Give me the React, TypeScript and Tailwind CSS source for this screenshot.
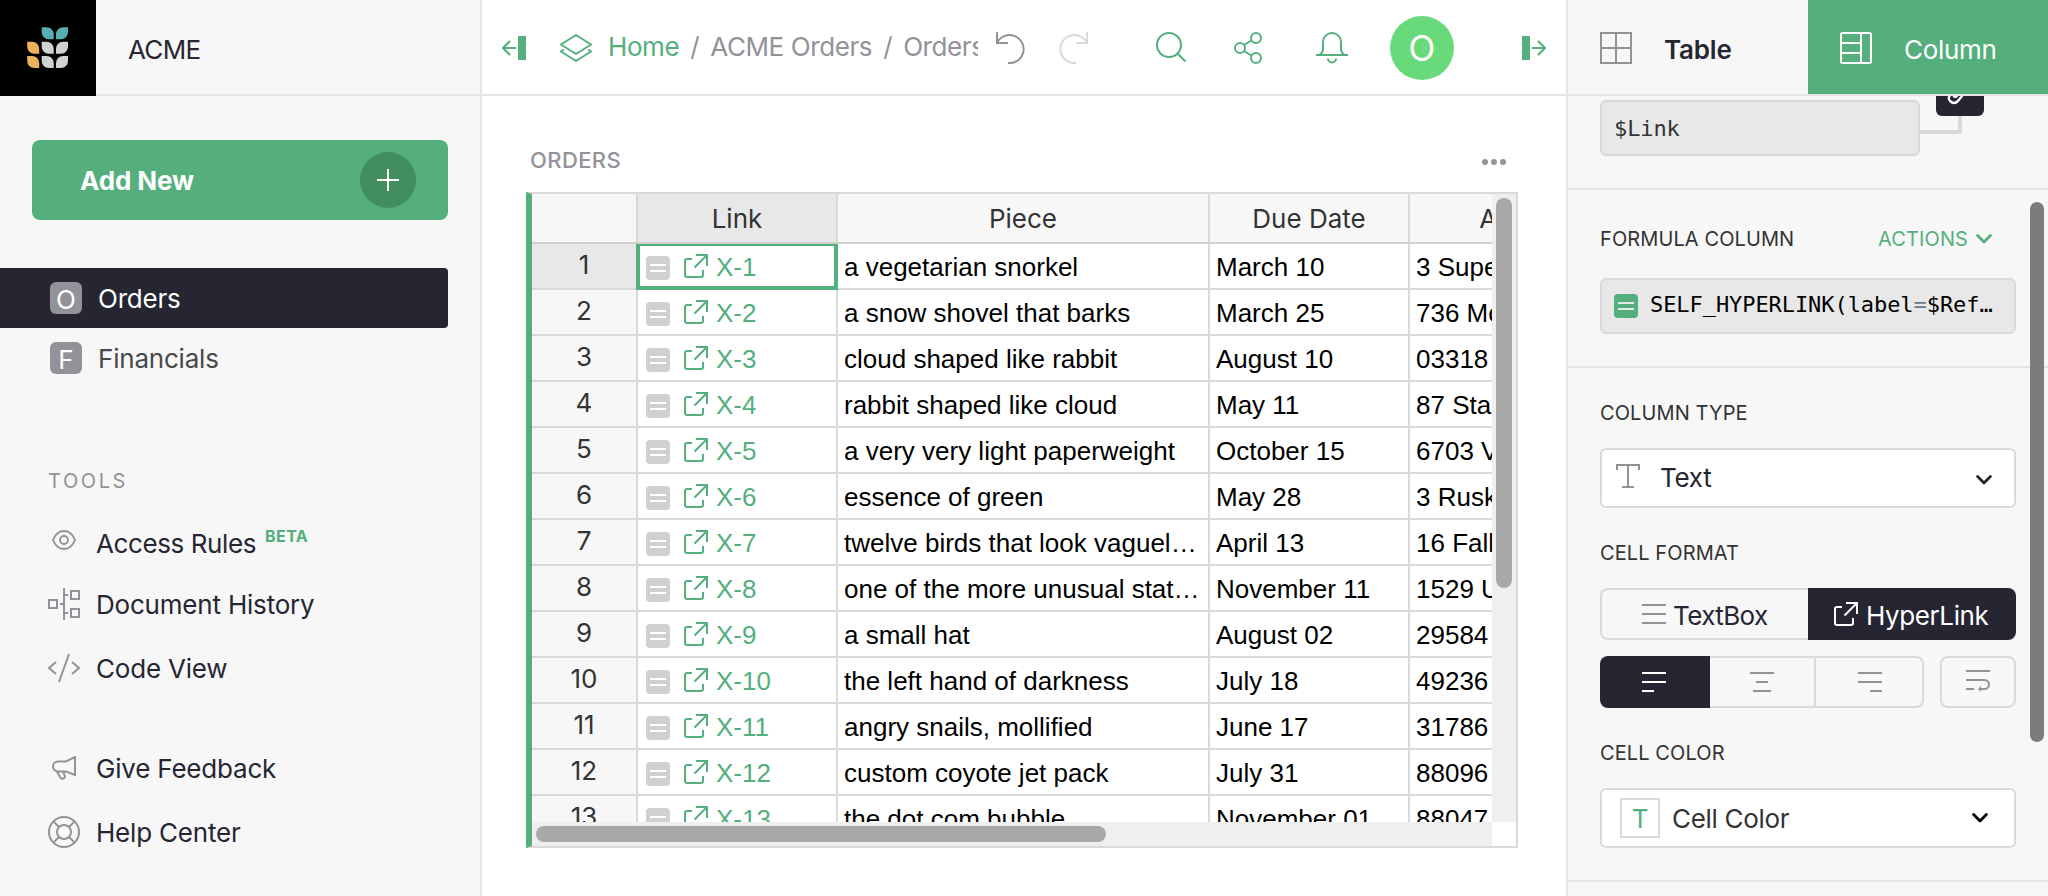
import React from "react";

const inter = "font-['Inter','Liberation_Sans',sans-serif]";
const arial = "font-['Liberation_Sans',Arial,sans-serif]";
const mono = "font-['DejaVu_Sans_Mono','Liberation_Mono',monospace]";

function Svg({ w = 32, h = 32, className = "", children }: { w?: number; h?: number; className?: string; children: React.ReactNode }) {
  return (
    <svg width={w} height={h} viewBox={`0 0 ${w} ${h}`} fill="none" stroke="currentColor" strokeWidth="2" className={`shrink-0 ${className}`}>
      {children}
    </svg>
  );
}

function Logo() {
  const leafR = (x: number, y: number, fill: string) => (
    <path d={`M${x + 12} ${y}v5a7 7 0 0 1-7 7h-5v-5a7 7 0 0 1 7-7z`} fill={fill} />
  );
  const leafL = (x: number, y: number, fill: string) => (
    <path d={`M${x} ${y}h5a7 7 0 0 1 7 7v5h-5a7 7 0 0 1-7-7z`} fill={fill} />
  );
  return (
    <svg width="42" height="42" viewBox="0 0 42 42">
      {leafL(14.7, 0.3, "#57aeb1")}
      {leafR(29, 0.3, "#57aeb1")}
      {leafL(0.2, 14.8, "#efb159")}
      {leafL(14.7, 14.8, "#d2d2d2")}
      {leafR(29, 14.8, "#d2d2d2")}
      {leafL(0.2, 29, "#efb159")}
      {leafL(14.7, 29, "#d2d2d2")}
      {leafR(29, 29, "#d2d2d2")}
    </svg>
  );
}

function LinkOut({ className = "" }: { className?: string }) {
  return (
    <Svg w={24} h={24} className={className}>
      <path d="M8 5H3a2 2 0 0 0-2 2v14a2 2 0 0 0 2 2h14a2 2 0 0 0 2-2v-5" />
      <path d="M12 1h11v11M23 1L10.5 13.5" />
    </Svg>
  );
}

function Chevron({ className = "" }: { className?: string }) {
  return (
    <svg width="16" height="10" viewBox="0 0 16 10" fill="none" stroke="currentColor" strokeWidth="2.8" strokeLinecap="round" strokeLinejoin="round" className={`shrink-0 ${className}`}>
      <path d="M1.6 1.6L8 8l6.4-6.4" />
    </svg>
  );
}

function PageItem({ letter, label, active = false }: { letter: string; label: string; active?: boolean }) {
  return (
    <div className={`mr-8 flex h-[60px] items-center rounded-r pl-[50px] ${active ? "bg-[#262633] text-white" : "text-[#494949]"}`}>
      <span className="flex size-8 items-center justify-center rounded-md bg-[#929299] pt-[3px] text-[26px] leading-8 text-white">{letter}</span>
      <span className="ml-4 pt-px tracking-[-0.2px]">{label}</span>
    </div>
  );
}

function Tool({ icon, label, badge, className }: { icon: React.ReactNode; label: string; badge?: string; className: string }) {
  return (
    <div className={`flex h-8 shrink-0 items-start pl-12 ${className}`}>
      <span className="flex size-8 shrink-0 items-center justify-center text-[#929299]">{icon}</span>
      <span className={`ml-4 leading-8 ${badge ? "pt-1 tracking-[-0.4px]" : "pt-px tracking-[-0.2px]"}`}>{label}</span>
      {badge && <span className="mt-0.5 ml-[9px] text-[16px] leading-5 font-bold tracking-[0.4px] text-[#54af7d]">{badge}</span>}
    </div>
  );
}

function Sidebar() {
  return (
    <aside className="flex w-[482px] shrink-0 flex-col border-r-2 border-[#e4e4e4] bg-[#f7f7f7] text-[26px] text-[#262633]">
      <div className="flex h-24 shrink-0">
        <div className="flex w-24 items-center justify-center bg-black"><Logo /></div>
        <div className="flex flex-1 items-center border-b-2 border-[#e4e4e4] pt-1 pl-8 tracking-[-0.7px]">ACME</div>
      </div>
      <button className="mx-8 mt-11 flex h-20 shrink-0 items-center justify-between rounded-lg bg-[#54af7d] pr-8 pl-12 font-bold text-white">
        <span className="tracking-[-0.1px]">Add New</span>
        <span className="flex size-14 items-center justify-center rounded-full bg-[#408d5d]">
          <Svg w={22} h={22}><path d="M11 0v22M0 11h22" /></Svg>
        </span>
      </button>
      <nav className="mt-12 flex shrink-0 flex-col">
        <PageItem letter="O" label="Orders" active />
        <PageItem letter="F" label="Financials" />
      </nav>
      <div className="mt-20 pl-12 text-[20px] leading-[26px] tracking-[2.6px] text-[#929299]">TOOLS</div>
      <Tool className="mt-[30px]" label="Access Rules" badge="BETA" icon={
        <Svg w={24} h={20}><path d="M1 10C3 5 7 1 12 1s9 4 11 9c-2 5-6 9-11 9S3 15 1 10z" /><circle cx="12" cy="10" r="4" /></Svg>
      } />
      <Tool className="mt-8" label="Document History" icon={
        <Svg><path d="M16 0v32M12 16h4M16 7h4M16 25h4" /><rect x="1" y="12" width="8" height="8" /><rect x="23" y="3" width="8" height="8" /><rect x="23" y="21" width="8" height="8" /></Svg>
      } />
      <Tool className="mt-8" label="Code View" icon={
        <Svg><path d="M8 10l-7 6 7 6M24 10l7 6-7 6M21 2L11 30" /></Svg>
      } />
      <Tool className="mt-[68px]" label="Give Feedback" icon={
        <Svg w={24} h={24}><path d="M23 1v18l-9-3.5H6A5 5 0 0 1 6 5.500h8zM5 15.500l3 5.500q1.500 2.500 3.500 1.500t1.200-3L11 15.500" /></Svg>
      } />
      <Tool className="mt-8" label="Help Center" icon={
        <Svg><circle cx="16" cy="16" r="15" /><circle cx="16" cy="16" r="7" /><path d="M5.400 5.400L11 11M26.600 5.400L21 11M5.400 26.600L11 21M26.600 26.600L21 21" /></Svg>
      } />
    </aside>
  );
}

function TopBar() {
  return (
    <header className="flex h-24 shrink-0 items-center border-b-2 border-[#e4e4e4] pt-0.5 pl-5 text-[26px] text-[#54af7d]">
      <Svg w={24} h={24}><rect x="16" y="0" width="8" height="24" fill="currentColor" stroke="none" /><path d="M14 12H1M8 5l-7 7 7 7" /></Svg>
      <Svg className="ml-[34px]"><path d="M16 3L31 12.500 16 22 1 12.500zM4 17.500L1 19.500 16 29 31 19.500 28 17.500" strokeLinejoin="round" /></Svg>
      <div className="ml-4 w-[370px] overflow-hidden pb-[3px] tracking-[-0.4px] whitespace-nowrap text-[#929299]">
        <span className="text-[#54af7d]">Home</span>
        <span className="mx-[11px]">/</span>
        <span>ACME Orders</span>
        <span className="mx-[11px]">/</span>
        <span>Orders</span>
      </div>
      <Svg className="ml-4 text-[#929299]"><path d="M3 0v11h11M3 11A14 14 0 1 1 14 31" /></Svg>
      <Svg className="ml-8 text-[#d9d9d9]"><path d="M29 0v11H18M29 11A14 14 0 1 0 18 31" /></Svg>
      <Svg className="ml-[66px]"><circle cx="13" cy="13" r="12" /><path d="M21.500 21.500l8 8" /></Svg>
      <Svg className="ml-11"><circle cx="24" cy="6" r="5" /><circle cx="8" cy="16" r="5" /><circle cx="24" cy="26" r="5" /><path d="M12 13l8-5M12 19l8 5" /></Svg>
      <Svg className="ml-[52px]"><path d="M0 23h32M3 23q4-2 4-6v-7a9 9 0 0 1 18 0v7q0 4 4 6M12 26.500a4 4 0 0 0 8 0" /></Svg>
      <div className="ml-[42px] flex size-16 items-center justify-center rounded-full bg-[#68da7b] text-[35px] text-white">O</div>
      <Svg w={24} h={24} className="ml-[68px]"><rect width="8" height="24" fill="currentColor" stroke="none" /><path d="M10 12h13M16 5l7 7-7 7" /></Svg>
    </header>
  );
}

const rows: [string, string, string][] = [
  ["a vegetarian snorkel", "March 10", "3 Superior"],
  ["a snow shovel that barks", "March 25", "736 Monroe"],
  ["cloud shaped like rabbit", "August 10", "03318 Oak"],
  ["rabbit shaped like cloud", "May 11", "87 Stanley"],
  ["a very very light paperweight", "October 15", "6703 Vera"],
  ["essence of green", "May 28", "3 Ruskin"],
  ["twelve birds that look vaguely alike", "April 13", "16 Fallview"],
  ["one of the more unusual statues", "November 11", "1529 Union"],
  ["a small hat", "August 02", "29584 Elm"],
  ["the left hand of darkness", "July 18", "49236 Elm"],
  ["angry snails, mollified", "June 17", "31786 Elm"],
  ["custom coyote jet pack", "July 31", "88096 Elm"],
  ["the dot com bubble", "November 01", "88047 Elm"],
];

const cols = "grid grid-cols-[106px_200px_372px_200px_240px]";

function Grid() {
  return (
    <div className="flex h-[656px] w-[992px] border-2 border-l-[6px] border-[#d9d9d9] border-l-[#54af7d]">
      <div className="flex w-[960px] flex-col">
        <div className="h-[628px] overflow-hidden text-[26px]">
          <div className={`${cols} h-[50px] border-b-2 border-[#d0d0d0] bg-[#f7f7f7] text-[#333]`}>
            <div className="border-r-2 border-[#d9d9d9]" />
            <div className="border-r-2 border-[#d9d9d9] bg-[#e8e8e8] pt-[5px] text-center leading-10">Link</div>
            <div className="border-r-2 border-[#d9d9d9] pt-[5px] text-center leading-10">Piece</div>
            <div className="border-r-2 border-[#d9d9d9] pt-[5px] text-center leading-10">Due Date</div>
            <div className="pt-[5px] text-center leading-10">Address</div>
          </div>
          {rows.map(([piece, due, addr], i) => (
            <div key={i} className={`${cols} grid-rows-[46px] text-black ${arial}`}>
              <div className={`border-r-2 border-b-2 border-[#d9d9d9] text-center leading-[41px] text-[#333] ${inter} ${i === 0 ? "bg-[#e8e8e8]" : "bg-[#f7f7f7]"}`}>{i + 1}</div>
              <div className="relative flex items-start border-r-2 border-b-2 border-[#d9d9d9] pl-2 text-[#54af7d]">
                <span className="mt-3 flex size-6 flex-col items-center justify-center gap-1 rounded bg-[#d0d0d0]">
                  <span className="h-0.5 w-4 bg-white" />
                  <span className="h-0.5 w-4 bg-white" />
                </span>
                <LinkOut className="mt-2.5 ml-3.5" />
                <span className="ml-2 leading-[46px]">X-{i + 1}</span>
                {i === 0 && <span className="absolute top-0 -right-0.5 -bottom-0.5 -left-0.5 border-4 border-t-2 border-[#54af7d]" />}
              </div>
              <div className="truncate border-r-2 border-b-2 border-[#d9d9d9] px-1.5 leading-[46px]">{piece}</div>
              <div className="truncate border-r-2 border-b-2 border-[#d9d9d9] px-1.5 leading-[46px]">{due}</div>
              <div className="truncate border-b-2 border-[#d9d9d9] px-1.5 leading-[46px]">{addr}</div>
            </div>
          ))}
        </div>
        <div className="h-6 bg-[#efefef] px-1 py-1">
          <div className="h-4 w-[570px] rounded-full bg-[#a8a8a8]" />
        </div>
      </div>
      <div className="h-[628px] w-6 bg-[#efefef] px-1 py-1">
        <div className="h-[390px] w-4 rounded-full bg-[#a8a8a8]" />
      </div>
    </div>
  );
}

function Main() {
  return (
    <main className="flex w-[1084px] shrink-0 flex-col bg-white">
      <TopBar />
      <div className="flex h-24 shrink-0 items-end justify-between pr-[60px] pb-[18px] pl-12 text-[#929299]">
        <span className="mb-px text-[22px] leading-[26px] font-medium tracking-[0.4px]">ORDERS</span>
        <Svg w={24} h={24}><g fill="currentColor" stroke="none"><circle cx="3" cy="12" r="3" /><circle cx="12" cy="12" r="3" /><circle cx="21" cy="12" r="3" /></g></Svg>
      </div>
      <div className="pl-11"><Grid /></div>
    </main>
  );
}

function Label({ children, className = "" }: { children: React.ReactNode; className?: string }) {
  return <div className={`text-[20px] leading-[26px] tracking-[0.1px] text-[#333] ${className}`}>{children}</div>;
}

function Panel() {
  return (
    <aside className="relative flex w-[482px] shrink-0 flex-col border-l-2 border-[#e4e4e4] bg-[#f7f7f7] text-[26px] text-[#262633]">
      <div className="flex h-24 shrink-0 border-b-2 border-[#e4e4e4]">
        <div className="flex w-60 items-center pt-0.5 pl-8">
          <Svg className="text-[#929299]"><rect x="1" y="1" width="30" height="30" /><path d="M16 1v30M1 16h30" /></Svg>
          <span className="ml-8 pt-0.5 font-semibold tracking-[-0.2px]">Table</span>
        </div>
        <div className="flex w-60 items-center bg-[#54af7d] pt-0.5 pl-8 text-white">
          <Svg><rect x="1" y="1" width="30" height="30" rx="1.500" /><path d="M21 1v30M1 11h20M1 21h20" /></Svg>
          <span className="ml-8 pt-0.5 tracking-[-0.3px]">Column</span>
        </div>
      </div>
      <div className="flex h-[94px] shrink-0 border-b-2 border-[#e4e4e4] pl-8">
        <div className={`mt-1 h-14 w-80 rounded-md border-2 border-[#d9d9d9] bg-[#e8e8e8] pl-3 text-[22px] leading-[53px] tracking-[-0.1px] text-[#333] ${mono}`}>$Link</div>
        <div className="flex flex-col">
          <div className="ml-4 flex h-5 w-12 overflow-hidden rounded-b-md bg-[#262633] pl-[11px] text-white">
            <svg width="18" height="10" viewBox="0 0 18 10" fill="none" stroke="currentColor" strokeWidth="2.4" strokeLinecap="round" className="shrink-0 overflow-visible">
              <path d="M4-2Q-.2 2.500 3.500 5.500t7.500-.500L15 0M7 .5l2 .3 2-2" />
            </svg>
          </div>
          <div className="h-[18px] w-[42px] border-r-4 border-b-4 border-[#d9d9d9]" />
        </div>
      </div>
      <div className="h-[178px] shrink-0 border-b-2 border-[#e4e4e4] px-8 pt-9">
        <div className="flex items-center">
          <Label>FORMULA COLUMN</Label>
          <span className="ml-auto text-[20px] leading-[26px] tracking-[0.1px] text-[#54af7d]">ACTIONS</span>
          <Chevron className="mr-6 ml-2 text-[#54af7d]" />
        </div>
        <div className={`mt-[26px] flex h-14 items-center rounded-md border-2 border-[#d9d9d9] bg-[#e8e8e8] pr-3 pl-3 text-[22px] tracking-[-0.07px] text-black ${mono}`}>
          <span className="flex size-6 shrink-0 flex-col items-center justify-center gap-1 rounded bg-[#54af7d]">
            <span className="h-0.5 w-4 bg-[#e8e8e8]" />
            <span className="h-0.5 w-4 bg-[#e8e8e8]" />
          </span>
          <span className="-mt-1 ml-3 whitespace-nowrap">SELF_HYPERLINK(label<span className="text-[#687687]">=</span>$Ref…</span>
        </div>
      </div>
      <div className="h-[514px] shrink-0 border-b-2 border-[#e4e4e4] px-8 pt-8 tracking-[-0.3px]">
        <Label>COLUMN TYPE</Label>
        <div className="mt-[22px] flex h-[60px] items-center rounded-md border-2 border-[#d9d9d9] bg-white px-3.5">
          <Svg w={24} h={24} className="-mt-1 text-[#929299]"><path d="M1 6V1h22v5M12 1v22M6 23h12" /></Svg>
          <span className="ml-5 -mt-0.5">Text</span>
          <Chevron className="mt-1 mr-2 ml-auto" />
        </div>
        <Label className="mt-8">CELL FORMAT</Label>
        <div className="mt-[22px] flex h-[52px]">
          <div className="flex w-[208px] items-center rounded-l-lg border-2 border-r-0 border-[#d9d9d9] pl-10">
            <Svg w={24} h={24} className="text-[#929299]"><path d="M0 3h24M0 12h24M0 21h24" /></Svg>
            <span className="ml-[7px] pt-0.5 tracking-[-0.6px]">TextBox</span>
          </div>
          <div className="flex w-[208px] items-center rounded-r-lg bg-[#262633] pl-[26px] text-white">
            <LinkOut />
            <span className="ml-2 pt-0.5 tracking-[-0.4px]">HyperLink</span>
          </div>
        </div>
        <div className="mt-4 flex h-[52px] text-[#929299]">
          <div className="flex w-[110px] items-center rounded-l-lg bg-[#262633] pl-[42px] text-white">
            <Svg w={24} h={20}><path d="M0 1h24M0 10h24M0 19h12" /></Svg>
          </div>
          <div className="flex w-[106px] items-center border-2 border-l-0 border-[#d9d9d9] pl-10">
            <Svg w={24} h={20}><path d="M0 1h24M6 10h12M3 19h18" /></Svg>
          </div>
          <div className="flex w-[108px] items-center rounded-r-lg border-2 border-l-0 border-[#d9d9d9] pl-[42px]">
            <Svg w={24} h={20}><path d="M0 1h24M0 10h24M12 19h12" /></Svg>
          </div>
          <div className="ml-4 flex w-[76px] items-start rounded-lg border-2 border-[#d9d9d9] pt-3 pl-6">
            <Svg w={24} h={24}><path d="M0 1h24M0 10h18.500a4.500 4.500 0 0 1 0 9H13M0 19h8" /><path d="M12 19l3-3v6z" fill="currentColor" stroke="none" /></Svg>
          </div>
        </div>
        <Label className="mt-8">CELL COLOR</Label>
        <div className="mt-[22px] flex h-[60px] items-center rounded-md border-2 border-[#d9d9d9] bg-white pl-[18px] text-[#333]">
          <span className="flex size-10 items-center justify-center border-2 border-[#d9d9d9] text-[#54af7d]">T</span>
          <span className="ml-3 pt-px">Cell Color</span>
          <Chevron className="mr-[26px] ml-auto text-black" />
        </div>
      </div>
      <div className="absolute top-[202px] right-1 h-[540px] w-3.5 rounded-full bg-[#7c7c7c]" />
    </aside>
  );
}

export default function App() {
  return (
    <div className={`flex h-[896px] w-[2048px] overflow-hidden bg-white ${inter}`}>
      <Sidebar />
      <Main />
      <Panel />
    </div>
  );
}
